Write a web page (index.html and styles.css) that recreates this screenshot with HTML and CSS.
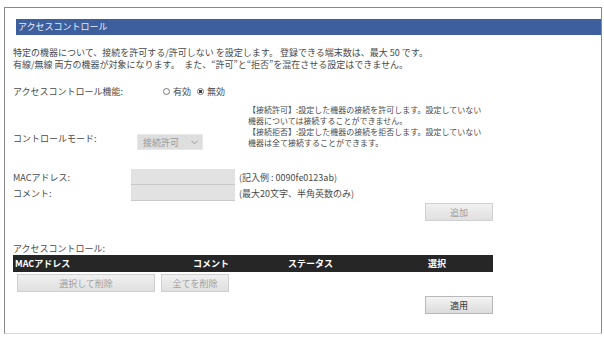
FILE: index.html
```html
<!DOCTYPE html>
<html lang="ja">
<head>
    <meta charset="UTF-8">
    <title>アクセスコントロール</title>
    <link rel="stylesheet" href="styles.css">
</head>
<body>
    <div class="panel">
        <div class="title-bar">アクセスコントロール</div>

        <div class="content">
            <p class="desc">特定の機器について、接続を許可する/許可しない を設定します。 登録できる端末数は、最大 50 です。<br>有線/無線 両方の機器が対象になります。　また、“許可”と“拒否”を混在させる設定はできません。</p>

            <div class="row func-row">
                <span class="label">アクセスコントロール機能:</span>
                <span class="radio"><span class="dot"></span>有効</span>
                <span class="radio checked"><span class="dot"></span>無効</span>
            </div>

            <div class="row mode-row">
                <span class="label">コントロールモード:</span>
                <span class="select">接続許可
                    <svg width="7" height="5" viewBox="0 0 7 5"><path d="M0.5 0.8 L3.5 3.8 L6.5 0.8" fill="none" stroke="#9a9a9a" stroke-width="1"/></svg>
                </span>
                <div class="mode-help">【接続許可】:設定した機器の接続を許可します。設定していない機器については接続することができません。<br>【接続拒否】:設定した機器の接続を拒否します。設定していない機器は全て接続することができます。</div>
            </div>

            <div class="row entry-row first">
                <span class="label short">MACアドレス:</span>
                <span class="field"></span>
                <span class="hint">(記入例 : 0090fe0123ab)</span>
            </div>
            <div class="row entry-row">
                <span class="label short">コメント:</span>
                <span class="field"></span>
                <span class="hint">(最大20文字、半角英数のみ)</span>
            </div>

            <div class="btn-line">
                <button class="btn disabled">追加</button>
            </div>

            <div class="list-title">アクセスコントロール:</div>
            <div class="list-head">
                <span class="col-mac">MACアドレス</span>
                <span class="col-comment">コメント</span>
                <span class="col-status">ステータス</span>
                <span class="col-select">選択</span>
            </div>
            <div class="list-actions">
                <button class="btn disabled wide">選択して削除</button>
                <button class="btn disabled">全てを削除</button>
            </div>

            <div class="btn-line apply-line">
                <button class="btn">適用</button>
            </div>
        </div>
    </div>
</body>
</html>
```

FILE: styles.css
```css
* {
    box-sizing: border-box;
}
body {
    margin: 0;
    background: #fff;
    font-family: "Noto Sans CJK JP", "Noto Sans", sans-serif;
    font-size: 9px;
    color: #4a4a4a;
}
.panel {
    margin: 7px 0 0 4px;
    width: 598px;
    height: 327px;
    border: 1px solid #8a8a8a;
    border-bottom-color: #d8d8d8;
}
.title-bar {
    margin: 11px 0 0 11px;
    height: 16px;
    line-height: 16px;
    padding-left: 2px;
    background: #3d5f9e;
    color: #e8eefa;
}
.content {
    padding-left: 8px;
}
.desc {
    margin: 12px 0 0;
    line-height: 12px;
}
.row {
    display: flex;
    align-items: center;
}
.label {
    width: 150px;
    flex: none;
}
.func-row {
    margin-top: 14px;
    height: 12px;
}
.radio {
    display: flex;
    align-items: center;
    margin-right: 6px;
}
.dot {
    width: 7px;
    height: 7px;
    margin-right: 3px;
    border: 1px solid #777;
    border-radius: 50%;
    background: #fff;
}
.radio.checked .dot {
    background: radial-gradient(circle, #444 0 1.6px, #fff 2px);
}
.mode-row {
    align-items: flex-end;
    margin-top: 7px;
}
.mode-row .label {
    width: 124px;
    padding-bottom: 3px;
}
.select {
    width: 66px;
    height: 16px;
    display: flex;
    align-items: center;
    justify-content: space-between;
    padding: 0 4px 0 5px;
    margin-bottom: -2px;
    background: #dedede;
    border: 1px solid #e8e8e8;
    color: #9a9a9a;
}
.mode-help {
    width: 241px;
    margin-left: 45px;
    font-size: 8px;
    line-height: 11px;
    word-break: break-all;
}
.entry-row {
    height: 16px;
}
.entry-row.first {
    margin-top: 21px;
}
.label.short {
    width: 118px;
}
.field {
    width: 104px;
    height: 16px;
    background: #e2e2e2;
    border-bottom: 1px solid #c8c8c8;
}
.hint {
    margin-left: 4px;
}
.btn-line {
    width: 480px;
    display: flex;
    justify-content: flex-end;
    margin-top: 2px;
}
.btn {
    width: 68px;
    height: 18px;
    padding: 0;
    font-family: inherit;
    font-size: 9px;
    color: #333;
    background: linear-gradient(#f4f4f4, #dcdcdc);
    border: 1px solid #b8b8b8;
}
.btn.disabled {
    color: #a0a0a0;
    background: linear-gradient(#f0f0f0, #e0e0e0);
    border-color: #d0d0d0;
}
.btn.wide {
    width: 138px;
    margin-right: 6px;
}
.list-title {
    margin-top: 22px;
    line-height: 12px;
}
.list-head {
    width: 480px;
    height: 17px;
    display: flex;
    align-items: center;
    background: #262626;
    color: #fff;
    font-weight: bold;
}
.col-mac {
    width: 180px;
    padding-left: 2px;
}
.col-comment {
    width: 95px;
}
.col-status {
    width: 137px;
}
.col-select {
    padding-left: 3px;
}
.list-actions {
    display: flex;
    margin: 2px 0 0 4px;
}
.apply-line {
    margin-top: 4px;
}
```
